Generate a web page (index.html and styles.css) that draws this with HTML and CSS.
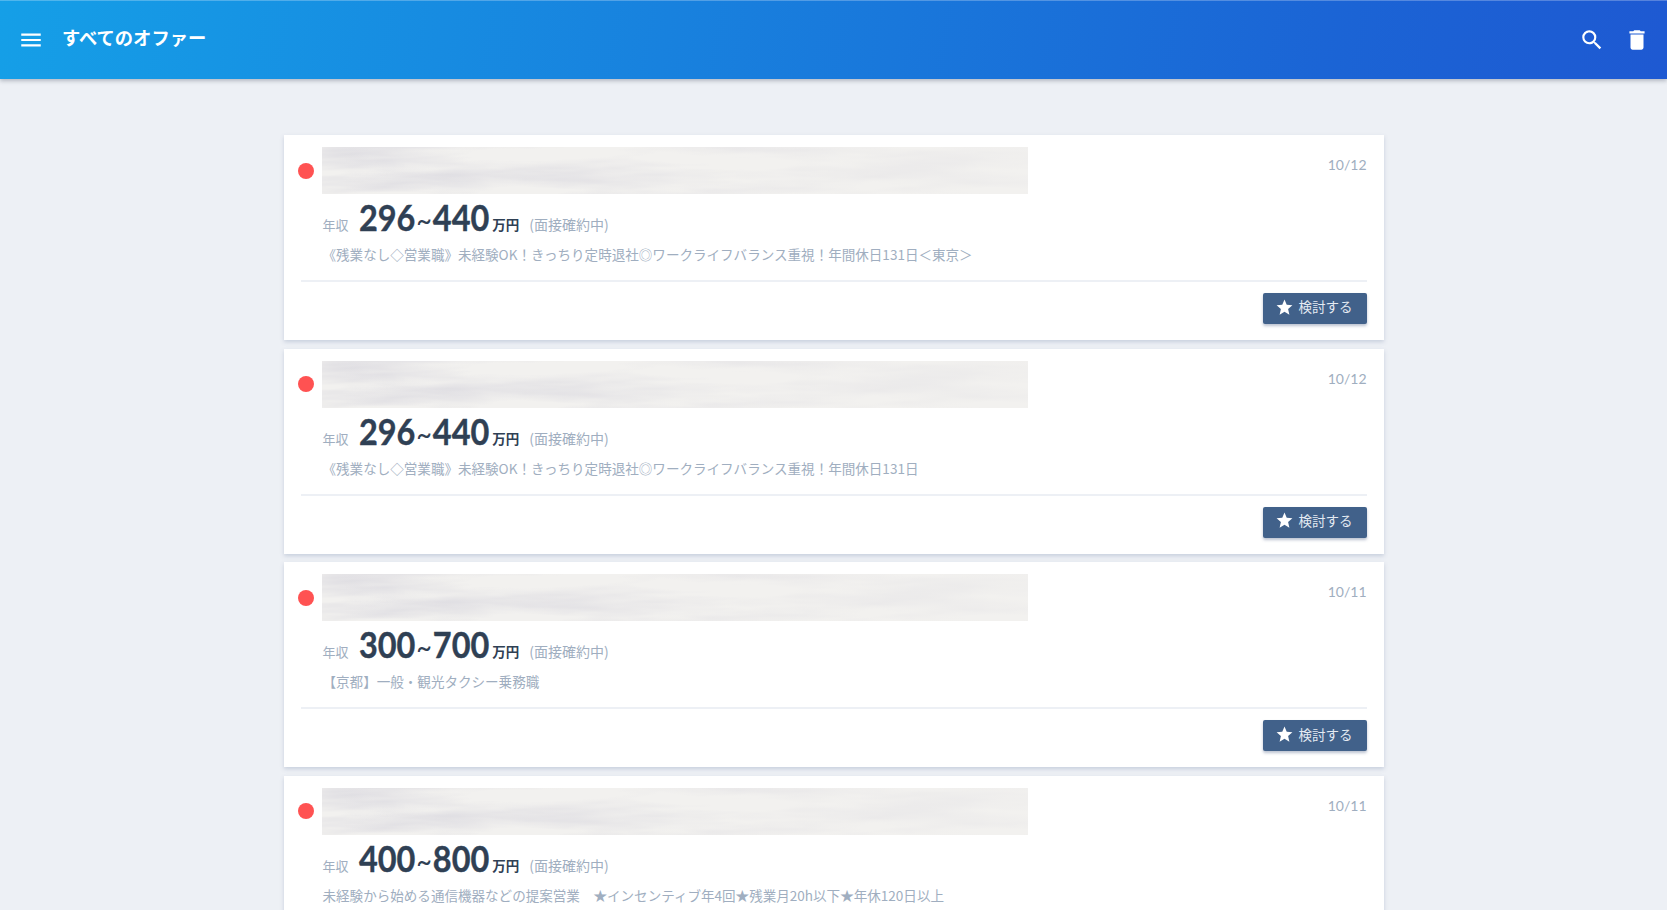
FILE: index.html
```html
<!DOCTYPE html>
<html lang="ja">
<head>
<meta charset="utf-8">
<title>すべてのオファー</title>
<link rel="stylesheet" href="styles.css">
</head>
<body>
<svg class="defs" width="0" height="0" aria-hidden="true">
  <defs>
    <filter id="streak" x="0" y="0" width="100%" height="100%" color-interpolation-filters="sRGB">
      <feTurbulence type="fractalNoise" baseFrequency="0.006 0.05" numOctaves="4" seed="11"/>
      <feColorMatrix type="matrix" values="0 0 0 0 0.87  0 0 0 0 0.865  0 0 0 0 0.885  2.2 0 0 0 -0.85"/>
    </filter>
    <linearGradient id="fade" x1="0" x2="1" y1="0" y2="0">
      <stop offset="0" stop-color="#f2f1ef" stop-opacity="0"/>
      <stop offset=".45" stop-color="#f2f1ef" stop-opacity=".35"/>
      <stop offset="1" stop-color="#f2f1ef" stop-opacity=".75"/>
    </linearGradient>
    <symbol id="star" viewBox="0 0 24 24"><path d="M12 17.27 18.18 21l-1.64-7.03L22 9.24l-7.19-.61L12 2 9.19 8.63 2 9.24l5.46 4.73L5.82 21z"/></symbol>
  </defs>
</svg>
<header class="appbar">
  <svg class="icon menu" viewBox="0 0 24 24"><path d="M3 18h18v-2H3v2zm0-5h18v-2H3v2zm0-7v2h18V6H3z"/></svg>
  <h1 class="title">すべてのオファー</h1>
  <div class="actions">
    <svg class="icon" viewBox="0 0 24 24"><path d="M15.5 14h-.79l-.28-.27A6.47 6.47 0 0 0 16 9.5 6.5 6.5 0 1 0 9.5 16c1.61 0 3.09-.59 4.23-1.57l.27.28v.79l5 4.99L20.49 19l-4.99-5zm-6 0C7.01 14 5 11.99 5 9.5S7.01 5 9.5 5 14 7.01 14 9.5 11.99 14 9.5 14z"/></svg>
    <svg class="icon" viewBox="0 0 24 24"><path d="M6 19c0 1.1.9 2 2 2h8c1.1 0 2-.9 2-2V7H6v12zM19 4h-3.5l-1-1h-5l-1 1H5v2h14V4z"/></svg>
  </div>
</header>
<main class="list">
  <article class="card">
    <div class="top"><span class="dot"></span><svg class="blur"><rect width="100%" height="100%" class="blur-base"/><rect width="100%" height="100%" filter="url(#streak)"/><rect width="100%" height="100%" fill="url(#fade)"/></svg><time class="date">10/12</time></div>
    <div class="salary"><span class="label">年収</span><strong class="amount">296<i>~</i>440</strong><span class="unit">万円</span><span class="note">(面接確約中)</span></div>
    <p class="desc">《残業なし◇営業職》未経験OK！きっちり定時退社◎ワークライフバランス重視！年間休日131日＜東京＞</p>
    <div class="foot"><button class="btn"><svg class="star"><use href="#star"/></svg>検討する</button></div>
  </article>
  <article class="card">
    <div class="top"><span class="dot"></span><svg class="blur"><rect width="100%" height="100%" class="blur-base"/><rect width="100%" height="100%" filter="url(#streak)"/><rect width="100%" height="100%" fill="url(#fade)"/></svg><time class="date">10/12</time></div>
    <div class="salary"><span class="label">年収</span><strong class="amount">296<i>~</i>440</strong><span class="unit">万円</span><span class="note">(面接確約中)</span></div>
    <p class="desc">《残業なし◇営業職》未経験OK！きっちり定時退社◎ワークライフバランス重視！年間休日131日</p>
    <div class="foot"><button class="btn"><svg class="star"><use href="#star"/></svg>検討する</button></div>
  </article>
  <article class="card">
    <div class="top"><span class="dot"></span><svg class="blur"><rect width="100%" height="100%" class="blur-base"/><rect width="100%" height="100%" filter="url(#streak)"/><rect width="100%" height="100%" fill="url(#fade)"/></svg><time class="date">10/11</time></div>
    <div class="salary"><span class="label">年収</span><strong class="amount">300<i>~</i>700</strong><span class="unit">万円</span><span class="note">(面接確約中)</span></div>
    <p class="desc">【京都】一般・観光タクシー乗務職</p>
    <div class="foot"><button class="btn"><svg class="star"><use href="#star"/></svg>検討する</button></div>
  </article>
  <article class="card">
    <div class="top"><span class="dot"></span><svg class="blur"><rect width="100%" height="100%" class="blur-base"/><rect width="100%" height="100%" filter="url(#streak)"/><rect width="100%" height="100%" fill="url(#fade)"/></svg><time class="date">10/11</time></div>
    <div class="salary"><span class="label">年収</span><strong class="amount">400<i>~</i>800</strong><span class="unit">万円</span><span class="note">(面接確約中)</span></div>
    <p class="desc">未経験から始める通信機器などの提案営業　★インセンティブ年4回★残業月20h以下★年休120日以上</p>
  </article>
</main>
</body>
</html>
```
FILE: styles.css
```css
* { box-sizing: border-box; }
html, body { height: 100%; overflow: hidden; }
body {
  margin: 0;
  background: #edf0f5;
  font-family: "Lato", "Noto Sans CJK JP", sans-serif;
  color: #a0aec0;
}
.defs { position: absolute; }
.appbar {
  height: 79px;
  display: flex;
  align-items: center;
  padding: 0 17px 0 18px;
  color: #fff;
  background: linear-gradient(100deg, #159fe7 0%, #1b64d5 80%, #1e59d2 100%);
  border-top: 1px solid rgba(255,255,255,.25);
  box-shadow: 0 2px 4px rgba(50,60,80,.3);
}
.icon { width: 26px; height: 26px; fill: #fff; display: block; }
.title {
  margin: 0 0 6px 18px;
  font-size: 18.3px;
  font-weight: 700;
  font-family: "Noto Sans CJK JP", sans-serif;
}
.actions { margin-left: auto; display: flex; gap: 19px; }
.list { padding-top: 56px; display: flex; flex-direction: column; align-items: center; gap: 8.67px; }
.card {
  width: 1100px;
  height: 205px;
  flex: none;
  background: #fff;
  padding: 12px 17px 0;
  box-shadow: 0 2px 4px rgba(90,110,150,.25);
}
.top { display: flex; align-items: center; height: 47px; }
.dot { width: 16px; height: 16px; border-radius: 50%; background: #ff5252; margin: 0 8px 0 -3px; flex: none; }
.blur { width: 706px; height: 47px; display: block; flex: none; }
.blur-base { fill: #f2f1ef; }
.date { margin-left: auto; align-self: flex-start; font-size: 14px; line-height: 18px; margin-top: 9px; }
.salary { display: flex; align-items: baseline; height: 46px; padding-left: 22px; line-height: 45px; }
.label { font-size: 13px; font-family: "Noto Sans CJK JP", sans-serif; margin-right: 10px; }
.amount {
  display: inline-block;
  font-size: 36px;
  font-weight: 700;
  color: #2f4054;
  -webkit-text-stroke: .4px #2f4054;
  transform: translateY(1px) scaleX(.9);
  transform-origin: left center;
  margin-right: -13px;
}
.amount i { font-style: normal; font-weight: 400; font-size: 30px; margin: 0 1px; -webkit-text-stroke: 0; }
.unit { font-size: 13.5px; font-weight: 700; color: #2f4054; font-family: "Noto Sans CJK JP", sans-serif; margin-left: 2px; }
.note { font-size: 14px; margin-left: 10px; font-family: "Noto Sans CJK JP", sans-serif; }
.desc { margin: 0; padding: 4px 0 0 22px; font-size: 13.55px; line-height: 20px; height: 40px; white-space: nowrap; font-family: "Noto Sans CJK JP", sans-serif; }
.foot { border-top: 2px solid #edf0f5; display: flex; justify-content: flex-end; padding-top: 11px; }
.btn {
  width: 104px;
  height: 31px;
  border: 0;
  border-radius: 2px;
  background: #41618a;
  color: #e4eaf2;
  font: 13.5px/1 "Noto Sans CJK JP", sans-serif;
  display: flex;
  align-items: center;
  justify-content: center;
  gap: 5px;
  padding: 0 2px 3px 0;
  box-shadow: 0 2px 3px rgba(60,80,120,.35);
}
.star { width: 19px; height: 19px; fill: #fff; }
```
